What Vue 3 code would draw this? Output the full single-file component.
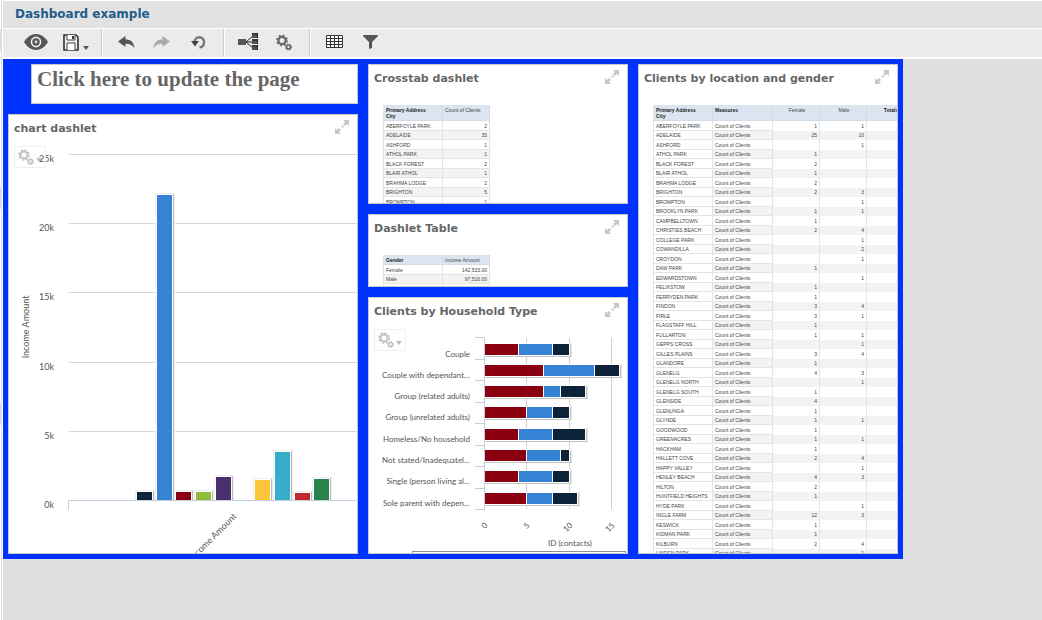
<script setup>
const income = [
  { x: 128, h: 8, c: '#0d233a' },
  { x: 148, h: 305, c: '#3682d5' },
  { x: 167, h: 8, c: '#8b0010' },
  { x: 187, h: 8, c: '#8fbc3a' },
  { x: 207, h: 23, c: '#492f6c' },
  { x: 246, h: 20, c: '#fcc53a' },
  { x: 266, h: 48, c: '#36adca' },
  { x: 286, h: 7, c: '#c1272d' },
  { x: 305, h: 21, c: '#29814b' },
]
const levels = ['25k', '20k', '15k', '10k', '5k', '0k'].map((label, i) => ({
  label,
  y: 12 + Math.round(i * 69.2),
}))

const unit = 8.45
const colors = ['#8b0010', '#3682d5', '#0d233a']
const households = [
  ['Couple', 4, 4, 2],
  ['Couple with dependant…', 7, 6, 3],
  ['Group (related adults)', 7, 2, 3],
  ['Group (unrelated adults)', 5, 3, 2],
  ['Homeless/No household', 4, 4, 4],
  ['Not stated/Inadequatel…', 5, 4, 1],
  ['Single (person living al…', 4, 4, 2],
  ['Sole parent with depen…', 5, 3, 3],
].map(([label, ...values], i) => {
  let sum = 0
  const parts = values.map((v, k) => {
    const from = Math.round(sum * unit)
    sum += v
    return { x: 116 + from, w: Math.round(sum * unit) - from, c: colors[k] }
  })
  return { label, parts, y: 19 + Math.floor(i * 21.3), total: Math.round(sum * unit) }
})
const ticks = Array.from({ length: 9 }, (_, i) => 12 + Math.round(i * 21.5))
const scale = [0, 5, 10, 15].map((n) => ({ n, x: 115 + Math.round(n * unit) }))

const crosstab = [
  ['ABERFOYLE PARK', 2],
  ['ADELAIDE', 35],
  ['ASHFORD', 1],
  ['ATHOL PARK', 1],
  ['BLACK FOREST', 2],
  ['BLAIR ATHOL', 1],
  ['BRAHMA LODGE', 2],
  ['BRIGHTON', 5],
  ['BROMPTON', 1],
]
const locations = [
  ['ABERFOYLE PARK', 1, 1],
  ['ADELAIDE', 25, 10],
  ['ASHFORD', '', 1],
  ['ATHOL PARK', 1, ''],
  ['BLACK FOREST', 2, ''],
  ['BLAIR ATHOL', 1, ''],
  ['BRAHMA LODGE', 2, ''],
  ['BRIGHTON', 2, 3],
  ['BROMPTON', '', 1],
  ['BROOKLYN PARK', 1, 1],
  ['CAMPBELLTOWN', 1, ''],
  ['CHRISTIES BEACH', 2, 4],
  ['COLLEGE PARK', '', 1],
  ['COWANDILLA', '', 2],
  ['CROYDON', '', 1],
  ['DAW PARK', 1, ''],
  ['EDWARDSTOWN', '', 1],
  ['FELIXSTOW', 1, ''],
  ['FERRYDEN PARK', 1, ''],
  ['FINDON', 3, 4],
  ['FIRLE', 3, 1],
  ['FLAGSTAFF HILL', 1, ''],
  ['FULLARTON', 1, 1],
  ['GEPPS CROSS', '', 1],
  ['GILLES PLAINS', 3, 4],
  ['GLANDORE', 1, ''],
  ['GLENELG', 4, 3],
  ['GLENELG NORTH', '', 1],
  ['GLENELG SOUTH', 1, ''],
  ['GLENSIDE', 4, ''],
  ['GLENUNGA', 1, ''],
  ['GLYNDE', 1, 1],
  ['GOODWOOD', 1, ''],
  ['GREENACRES', 1, 1],
  ['HACKHAM', 1, ''],
  ['HALLETT COVE', 2, 4],
  ['HAPPY VALLEY', '', 1],
  ['HENLEY BEACH', 4, 3],
  ['HILTON', 2, ''],
  ['HUNTFIELD HEIGHTS', 1, ''],
  ['HYDE PARK', '', 1],
  ['INGLE FARM', 12, 3],
  ['KESWICK', 1, ''],
  ['KIDMAN PARK', 1, ''],
  ['KILBURN', 2, 4],
  ['LINDEN PARK', '', 1],
]
</script>

<template>
  <div class="app">
    <svg class="symbols" width="0" height="0" aria-hidden="true">
      <symbol id="expand" viewBox="0 0 14 14">
        <path d="M8 0h6v6l-2-2-2 2 -2-2 2-2zM7 5l2 2-1 1-2-2zM0 14V8l2 2 2-2 2 2-2 2 2 2z" fill="#c6c6c6" />
      </symbol>
      <symbol id="gears" viewBox="0 0 16 16">
        <g fill="none" stroke="currentColor">
          <circle cx="6" cy="6" r="3.6" stroke-width="2.2" />
          <circle cx="6" cy="6" r="5.1" stroke-width="1.6" stroke-dasharray="2 2" />
          <circle cx="12.5" cy="12.5" r="2" stroke-width="1.7" />
          <circle cx="12.5" cy="12.5" r="3" stroke-width="1" stroke-dasharray="1.3 1.1" />
        </g>
      </symbol>
    </svg>

    <div class="rail"><i></i><i></i><i></i></div>

    <div class="main">
      <header class="heading"><h2>Dashboard example</h2></header>

      <nav class="toolbar">
        <div class="group first">
          <button aria-label="Preview">
            <svg width="24" height="16" viewBox="0 0 24 16">
              <path d="M0 8Q5 0 12 0T24 8Q19 16 12 16T0 8z" fill="#555" />
              <circle cx="12" cy="8" r="5.4" fill="#ebebeb" />
              <circle cx="12" cy="8" r="3.7" fill="#555" />
              <circle cx="12" cy="8" r="1.4" fill="#ddd" />
            </svg>
          </button>
          <button class="wide" aria-label="Save">
            <svg width="28" height="17" viewBox="0 0 28 17">
              <path d="M2 1h12l2 2v13H2z" fill="#eee" stroke="#333" stroke-width="1.6" />
              <path d="M5 1v5h8V1M5 16V9h8v7" fill="#fff" stroke="#444" />
              <path d="M10 2h2v3h-2z" fill="#333" />
              <path d="M21 12h6l-3 4z" fill="#555" />
            </svg>
          </button>
        </div>
        <div class="group">
          <button aria-label="Undo">
            <svg width="18" height="14" viewBox="0 0 18 14">
              <path d="M1 6.500L8.500 1v3.500C13.500 4.500 17 7 17.500 13 15 9.500 12.500 8.600 8.500 8.700V12z" fill="#555" />
            </svg>
          </button>
          <button aria-label="Redo">
            <svg width="18" height="14" viewBox="0 0 18 14">
              <path d="M17 6.500L9.500 1v3.500C4.500 4.500 1 7 .5 13 3 9.500 5.500 8.600 9.500 8.700V12z" fill="#aaa" />
            </svg>
          </button>
          <button aria-label="Reset">
            <svg width="16" height="14" viewBox="0 0 16 14">
              <path d="M4.500 7.500C4.500 .5 14 .5 14 7.200 14 10 12.500 12 9.500 12.500" fill="none" stroke="#777" stroke-width="2.4" />
              <path d="M1 6h8l-4 5.500z" fill="#444" />
            </svg>
          </button>
        </div>
        <div class="group">
          <button aria-label="Related reports">
            <svg width="22" height="18" viewBox="0 0 22 18">
              <path d="M9 9l7-6M9 9h7M9 9l7 6" stroke="#222" fill="none" />
              <path d="M1 6h8v6H1zM15 0h6v5h-6zM15 6h6v5h-6zM15 12h6v5h-6z" fill="#555" />
              <path d="M15 1h6M15 7h6M15 13h6M20.500 0v5M20.500 6v5M20.500 12v5" stroke="#222" fill="none" />
            </svg>
          </button>
          <button aria-label="Settings">
            <svg class="dark" width="16" height="17"><use href="#gears" /></svg>
          </button>
        </div>
        <div class="group last">
          <button aria-label="Grid">
            <svg width="18" height="14" viewBox="0 0 18 14">
              <path fill="#fff" d="M1 0h17v13H1z" />
              <path d="M1.500.5h16v12h-16zM5.500 0v13M9.500 0v13M13.500 0v13M1 3.500h17M1 6.500h17M1 9.500h17" stroke="#333" fill="none" />
            </svg>
          </button>
          <button aria-label="Filter">
            <svg width="16" height="14" viewBox="0 0 16 14">
              <path d="M1 0h15v1L10 7v6L7 14V7L1 1z" fill="#555" />
            </svg>
          </button>
        </div>
      </nav>

      <main class="board">
        <div class="col">
          <section class="card banner"><h1>Click here to update the page</h1></section>
          <section class="card grow">
            <h3>chart dashlet</h3>
            <button class="expand" aria-label="Expand"><svg width="14" height="14"><use href="#expand" /></svg></button>
            <svg class="chart" role="img" aria-label="Income Amount">
              <g>
                <text v-for="l in levels" :key="l.label" x="45" :y="l.y + 8" text-anchor="end">{{ l.label }}</text>
              </g>
              <rect
                v-for="l in levels.slice(0, 5)" :key="l.y" x="60" :y="l.y" width="100%" height="1" fill="#d8d8d8"
              />
              <g v-for="b in income" :key="b.x">
                <rect :x="b.x - 2" :y="356 - b.h" width="20" :height="b.h + 2" fill="#eee" />
                <rect :x="b.x + 15" :y="357 - b.h" width="2" :height="b.h + 1" fill="#bbb" />
                <rect :x="b.x - 1" :y="357 - b.h" width="17" :height="b.h + 1" fill="#fff" />
                <rect :x="b.x" :y="358 - b.h" width="15" :height="b.h" :fill="b.c" />
              </g>
              <path d="M59.500 368v-9.500H2000" fill="none" stroke="#c0d0e0" />
              <text text-anchor="middle" transform="translate(20 185) rotate(-90)">Income Amount</text>
              <text text-anchor="end" transform="translate(228 375) rotate(-45)">Income Amount</text>
            </svg>
            <button class="chip" aria-label="Chart options">
              <svg width="16" height="16"><use href="#gears" /></svg><i></i>
            </button>
          </section>
        </div>

        <div class="col">
          <section class="card crosstab">
            <h3>Crosstab dashlet</h3>
            <button class="expand" aria-label="Expand"><svg width="14" height="14"><use href="#expand" /></svg></button>
            <table>
              <thead>
                <tr><th class="name strong">Primary Address<br>City</th><th class="num">Count of Clients</th></tr>
              </thead>
              <tbody>
                <tr v-for="r in crosstab" :key="r[0]"><td>{{ r[0] }}</td><td class="val">{{ r[1] }}</td></tr>
              </tbody>
            </table>
          </section>
          <section class="card gender">
            <h3>Dashlet Table</h3>
            <button class="expand" aria-label="Expand"><svg width="14" height="14"><use href="#expand" /></svg></button>
            <table>
              <thead>
                <tr><th class="name strong">Gender</th><th class="num">Income Amount</th></tr>
              </thead>
              <tbody>
                <tr><td>Female</td><td class="val">142,533.00</td></tr>
                <tr><td>Male</td><td class="val">97,516.00</td></tr>
                <tr><td></td><td></td></tr>
              </tbody>
            </table>
          </section>
          <section class="card grow">
            <h3>Clients by Household Type</h3>
            <button class="expand" aria-label="Expand"><svg width="14" height="14"><use href="#expand" /></svg></button>
            <svg class="chart small" role="img" aria-label="Clients by Household Type">
              <rect v-for="s in scale.slice(1)" :key="s.n" :x="s.x" y="13" width="1" height="171" fill="#d0d0d0" />
              <g v-for="h in households" :key="h.label">
                <text x="101" :y="h.y + 13" text-anchor="end">{{ h.label }}</text>
                <rect x="116" :y="h.y - 1" :width="h.total + 2" height="14" fill="#e4e4e4" />
                <rect x="117" :y="h.y + 1" :width="h.total" height="12" fill="#c4c4c4" />
                <rect x="116" :y="h.y - 1" :width="h.total" height="13" fill="#fff" />
                <rect v-for="p in h.parts" :key="p.x" :x="p.x" :y="h.y" :width="p.w - 1" height="11" :fill="p.c" />
              </g>
              <path d="M115.500 12v173" stroke="#c0d0e0" />
              <rect v-for="t in ticks" :key="t" x="106" :y="t" width="9" height="1" fill="#c0d0e0" />
              <text
                v-for="s in scale" :key="s.n" text-anchor="end"
                :transform="`translate(${s.x + 4} 201) rotate(-45)`"
              >{{ s.n }}</text>
              <text x="201" y="221" text-anchor="middle">ID (contacts)</text>
              <rect x="43.500" y="226.500" width="213" height="40" fill="#fff" stroke="#909090" />
            </svg>
            <button class="chip" aria-label="Chart options">
              <svg width="16" height="16"><use href="#gears" /></svg><i></i>
            </button>
          </section>
        </div>

        <div class="col">
          <section class="card grow">
            <h3>Clients by location and gender</h3>
            <button class="expand" aria-label="Expand"><svg width="14" height="14"><use href="#expand" /></svg></button>
            <table class="places">
              <thead>
                <tr>
                  <th class="name strong">Primary Address<br>City</th>
                  <th class="name strong">Measures</th>
                  <th class="num mid">Female</th>
                  <th class="num mid">Male</th>
                  <th class="num mid strong">Totals</th>
                </tr>
              </thead>
              <tbody>
                <tr v-for="r in locations" :key="r[0]">
                  <td>{{ r[0] }}</td>
                  <td>Count of Clients</td>
                  <td class="val">{{ r[1] }}</td>
                  <td class="val">{{ r[2] }}</td>
                  <td></td>
                </tr>
              </tbody>
            </table>
          </section>
        </div>
      </main>
    </div>
  </div>
</template>

<style>
body {
  background: #e0e0e0;
}
</style>

<style scoped>
.app {
  display: flex;
  min-height: 100vh;
  font-family: "DejaVu Sans", Verdana, sans-serif;
  color: #666;
}
.symbols {
  position: absolute;
}
.rail {
  display: flex;
  flex-direction: column;
  flex: none;
  width: 2px;
  box-sizing: border-box;
  margin-right: 1px;
  padding-top: 29px;
  background: #fff;
  border-right: 1px solid #ddd;
  box-shadow: 1px 0 #fff;
}
.rail i {
  height: 22px;
  background: #d5dfeb;
  margin-bottom: 136px;
}
.rail i + i {
  background: #ddd;
  margin-bottom: 194px;
}
.main {
  flex: 1;
  min-width: 0;
}
h1, h2, h3 {
  margin: 0;
}
.heading {
  height: 27px;
  border-top: 1px solid #fff;
  background: #e2e2e2;
  padding-left: 12px;
}
h2 {
  font-size: 12px;
  line-height: 27px;
  color: #215d8c;
}
.toolbar {
  display: flex;
  height: 28px;
  background: #ebebeb;
  border-top: 1px solid #fff;
  border-bottom: 2px solid #fff;
}
.group {
  display: flex;
  padding: 0 7px 0 6px;
  border-right: 1px solid #ccc;
  box-shadow: 1px 0 #fff;
}
.group.first {
  padding: 0 3px 0 15px;
}
.group.last {
  border: 0;
  box-shadow: none;
}
button {
  border: 0;
  padding: 0;
  background: none;
  display: flex;
  align-items: center;
  justify-content: center;
}
.toolbar button {
  width: 36px;
  padding-bottom: 2px;
}
.toolbar button.wide {
  width: 44px;
}
.dark {
  color: #666;
}
.board {
  display: grid;
  grid-template-columns: 35fr 26fr 26fr;
  gap: 10px;
  box-sizing: border-box;
  max-width: 900px;
  height: calc(100vh - 120px);
  min-height: 400px;
  padding: 5px;
  background: #0033ff;
}
.col {
  display: flex;
  flex-direction: column;
  gap: 10px;
  min-width: 0;
  min-height: 0;
}
.card {
  position: relative;
  box-sizing: border-box;
  overflow: hidden;
  background: #fff;
  border: 1px solid #c8c8c8;
  flex: none;
}
.card.grow {
  flex: 1;
  min-height: 0;
  display: flex;
  flex-direction: column;
}
.banner {
  height: 40px;
  margin-left: 23px;
  padding-left: 5px;
}
h1 {
  font: bold 21px/28px "Liberation Serif", Georgia, serif;
  white-space: nowrap;
}
h3 {
  flex: none;
  font-size: 11px;
  line-height: 27px;
  padding-left: 5px;
  white-space: nowrap;
}
.crosstab {
  height: 140px;
}
.gender {
  height: 73px;
}
.expand {
  position: absolute;
  top: 5px;
  right: 8px;
}
.chart {
  flex: 1;
  min-height: 0;
  width: 100%;
  font: 9px Lato, "Lucida Grande", sans-serif;
  fill: #555;
}
.chart.small {
  font-size: 8px;
}
.chip {
  position: absolute;
  top: 31px;
  left: 5px;
  gap: 2px;
  height: 22px;
  width: 32px;
  border: 1px solid #f0f0f0;
  color: #c4c4c4;
}
.chip i {
  margin-top: 5px;
  border: 3px solid transparent;
  border-top: 4px solid #bbb;
  border-bottom: 0;
}
table {
  table-layout: fixed;
  width: 107px;
  margin: 13px 0 0 14px;
  border-collapse: separate;
  border-spacing: 0;
  font: 5px/8px "Liberation Sans", Arial, sans-serif;
  color: #444;
}
table.places {
  width: 261px;
}
th, td {
  box-sizing: border-box;
  padding: 0 2px;
  border-right: 1px solid #e4e4e4;
  border-bottom: 1px solid #e4e4e4;
  height: 10px;
}
td {
  white-space: nowrap;
}
th {
  background: #dbe5f0;
  border-color: #d2dbe6;
  font-weight: normal;
  text-align: left;
  vertical-align: top;
  line-height: 6px;
  padding: 2px 2px 1px;
}
.name {
  width: 60px;
}
.num {
  width: 47px;
  padding-right: 0;
}
.mid {
  text-align: center;
}
.strong {
  font-weight: bold;
  color: #222;
}
.val {
  text-align: right;
}
td:first-child, th:first-child {
  border-left: 1px solid #e4e4e4;
}
tr:nth-child(even) td {
  height: 9px;
  background: #f3f3f3;
}
.places tr:nth-child(even) td:first-child {
  background: #fff;
}
.places td:nth-child(n + 3) {
  border-bottom-color: transparent;
}
</style>
